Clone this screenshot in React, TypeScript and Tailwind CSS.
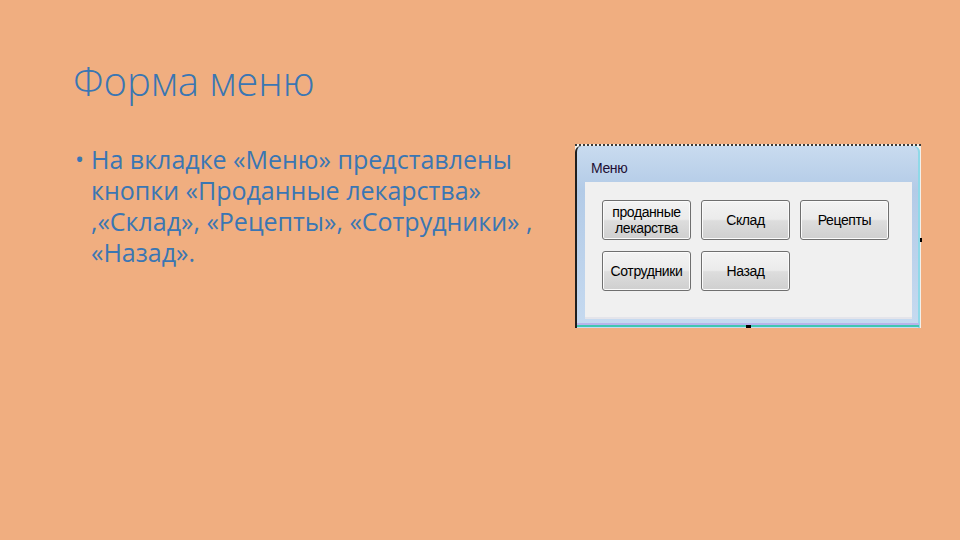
import React from "react";

function WinButton({ children, wrap }: { children: React.ReactNode; wrap?: boolean }) {
  return (
    <button
      className={
        "flex h-[40px] w-[89px] items-center justify-center rounded-[3px] border border-[#6f6f6f] bg-[linear-gradient(#f3f3f3_0%,#ebebeb_48%,#dddddd_52%,#cfcfcf_100%)] text-[14px] tracking-[-0.4px] text-black shadow-[inset_0_0_0_1px_#fbfbfb] " +
        (wrap ? "leading-[16px]" : "leading-none")
      }
      style={{ fontFamily: '"Liberation Sans", Arial, sans-serif' }}
    >
      {children}
    </button>
  );
}

function MenuForm() {
  return (
    <div className="relative h-[184px] w-[346px] border-t-2 border-dotted border-[#3a3a3a] bg-[#f3efe9] pr-[1px]">
      <div className="flex h-full flex-col rounded-t-[6px] border-l-2 border-[#1f1f1f] bg-[linear-gradient(#c9dbef,#b3cbe7_24%,#c6daf0_100%)] px-[8px] pb-[9px] shadow-[inset_-2px_0_0_#8fd9e8]">
        <div
          className="flex h-[36px] items-center pl-[6px] pt-[8px] text-[14px] tracking-[-0.4px] text-[#1e0f33]"
          style={{ fontFamily: '"Liberation Sans", Arial, sans-serif' }}
        >
          Меню
        </div>
        <div className="flex-1 border-b-2 border-[#e4e4ea] bg-[#f0f0f0] pl-[17px] pt-[18px]">
          <div className="grid grid-cols-[89px_89px_89px] gap-x-[10px] gap-y-[11px]">
            <WinButton wrap>
              <span className="text-center">
                проданные
                <br />
                лекарства
              </span>
            </WinButton>
            <WinButton>Склад</WinButton>
            <WinButton>Рецепты</WinButton>
            <WinButton>Сотрудники</WinButton>
            <WinButton>Назад</WinButton>
          </div>
        </div>
      </div>
      <div className="absolute bottom-[3px] left-[2px] right-[2px] h-[2px] bg-[#b9b4ec]" />
      <div className="absolute bottom-[1px] left-[2px] right-[2px] h-[2px] bg-[#3fc7b2]" />
      <div className="absolute bottom-0 left-[171px] h-[3px] w-[5px] bg-black" />
      <div className="absolute right-[-1px] top-[92px] h-[4px] w-[2px] bg-black" />
    </div>
  );
}

export default function App() {
  return (
    <div
      className="h-[540px] w-[960px] overflow-hidden bg-[#f0ae80] pl-[73px] pt-[53px]"
      style={{ fontFamily: '"Open Sans", "Noto Sans", sans-serif' }}
    >
      <h1 className="text-[40px] font-light leading-[56px] text-[#3a76b3]">Форма меню</h1>
      <div className="mt-[35px] flex items-start">
        <div className="flex w-[480px] text-[25px] leading-[31px] text-[#3a76b3]">
          <span className="w-[18px] shrink-0 pl-[2px] text-[24px] leading-[29px]">•</span>
          <p className="whitespace-nowrap">
            На вкладке «Меню» представлены
            <br />
            кнопки «Проданные лекарства»
            <br />
            ,«Склад», «Рецепты», «Сотрудники» ,
            <br />
            «Назад».
          </p>
        </div>
        <div className="ml-[22px]">
          <MenuForm />
        </div>
      </div>
    </div>
  );
}
